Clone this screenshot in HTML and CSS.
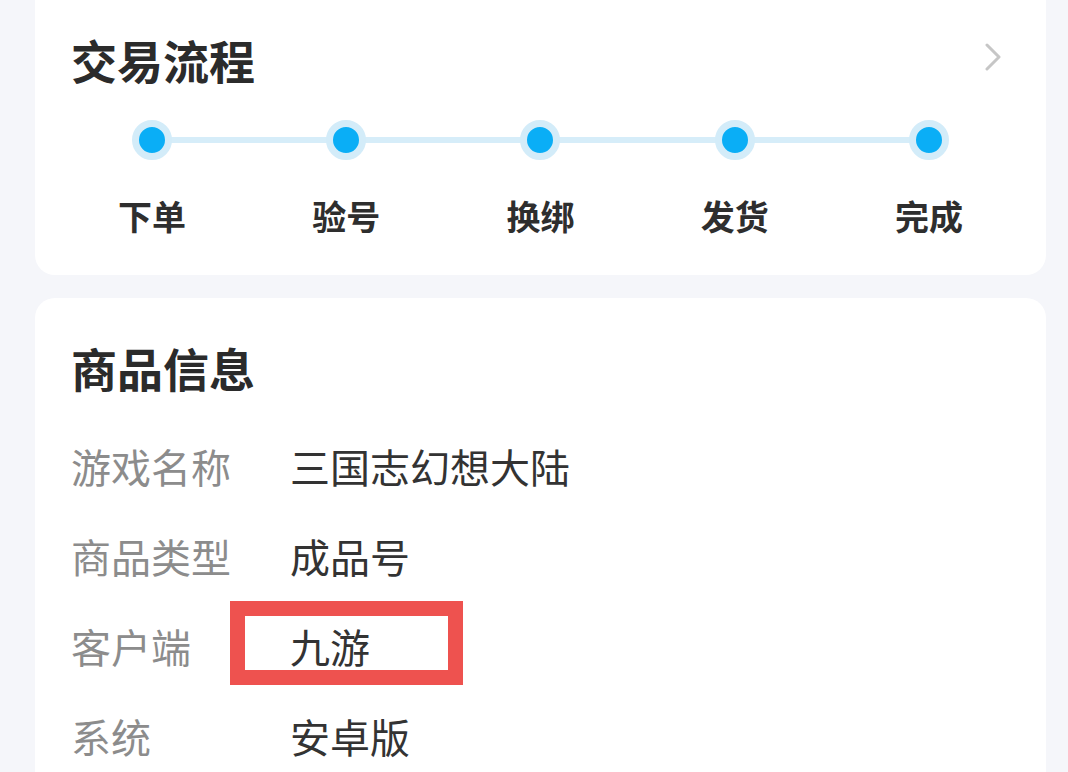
FILE: index.html
```html
<!DOCTYPE html>
<html lang="zh-CN">
<head>
<meta charset="utf-8">
<title>交易流程</title>
<link rel="stylesheet" href="styles.css">
</head>
<body>
<div class="page">
  <section class="card card-flow">
    <div class="card-head">
      <h2 class="card-title">交易流程</h2>
      <svg class="chevron" width="16" height="28" viewBox="0 0 16 28"><polyline points="2,2 14,14 2,26" fill="none" stroke="#c6c6c6" stroke-width="3" stroke-linecap="round" stroke-linejoin="round"/></svg>
    </div>
    <div class="steps">
      <div class="step"><span class="dot"></span><span class="step-label">下单</span></div>
      <div class="step"><span class="dot"></span><span class="step-label">验号</span></div>
      <div class="step"><span class="dot"></span><span class="step-label">换绑</span></div>
      <div class="step"><span class="dot"></span><span class="step-label">发货</span></div>
      <div class="step"><span class="dot"></span><span class="step-label">完成</span></div>
    </div>
  </section>
  <section class="card card-info">
    <h2 class="card-title">商品信息</h2>
    <div class="rows">
      <div class="row"><span class="row-label">游戏名称</span><span class="row-value">三国志幻想大陆</span></div>
      <div class="row"><span class="row-label">商品类型</span><span class="row-value">成品号</span></div>
      <div class="row row-marked"><span class="row-label">客户端</span><span class="row-value">九游</span><span class="mark"></span></div>
      <div class="row"><span class="row-label">系统</span><span class="row-value">安卓版</span></div>
    </div>
  </section>
</div>
</body>
</html>
```

FILE: styles.css
```css
html, body {
  margin: 0;
  padding: 0;
  background: #f5f6fa;
  height: 772px;
  overflow: hidden;
}
body {
  font-family: "Noto Sans CJK SC", "Noto Sans", sans-serif;
  color: #333;
}
.page {
  padding: 0 22px 0 35px;
  display: flex;
  flex-direction: column;
  gap: 23px;
}
.card {
  background: #fff;
  border-radius: 20px;
}
.card-flow {
  border-radius: 0 0 20px 20px;
  padding: 36px 20px 42px 20px;
}
.card-head {
  display: flex;
  align-items: center;
  justify-content: space-between;
  padding: 0 25px 0 16px;
}
.card-title {
  margin: 0;
  font-size: 46px;
  line-height: 46px;
  font-weight: 700;
  color: #2b2b2b;
}
.chevron {
  display: block;
  margin-bottom: 5px;
}
.steps {
  position: relative;
  display: grid;
  grid-template-columns: repeat(5, 1fr);
  margin-top: 38px;
}
.steps::before {
  content: "";
  position: absolute;
  left: 10%;
  right: 10%;
  top: 17px;
  height: 6px;
  background: #d6edf9;
}
.step {
  position: relative;
  display: flex;
  flex-direction: column;
  align-items: center;
  gap: 39px;
}
.dot {
  width: 40px;
  height: 40px;
  box-sizing: border-box;
  border-radius: 50%;
  background: #0aaef6;
  border: 7px solid #d3ecf9;
}
.step-label {
  font-size: 34px;
  line-height: 34px;
  font-weight: 700;
  color: #2e2e2e;
}
.card-info {
  box-sizing: border-box;
  border-radius: 20px 20px 0 0;
  padding: 46px 20px 0 36px;
  height: 474px;
  overflow: hidden;
}
.rows {
  margin-top: 31px;
  display: flex;
  flex-direction: column;
}
.row {
  position: relative;
  display: flex;
  align-items: center;
  height: 90px;
  flex: none;
  font-size: 40px;
  line-height: 40px;
}
.row-label {
  width: 219px;
  flex: none;
  color: #8c8c8c;
}
.row-value {
  color: #333;
}
.mark {
  position: absolute;
  left: 159px;
  top: 0;
  width: 233px;
  height: 84px;
  box-sizing: border-box;
  border: 15px solid #ee524f;
}
```
